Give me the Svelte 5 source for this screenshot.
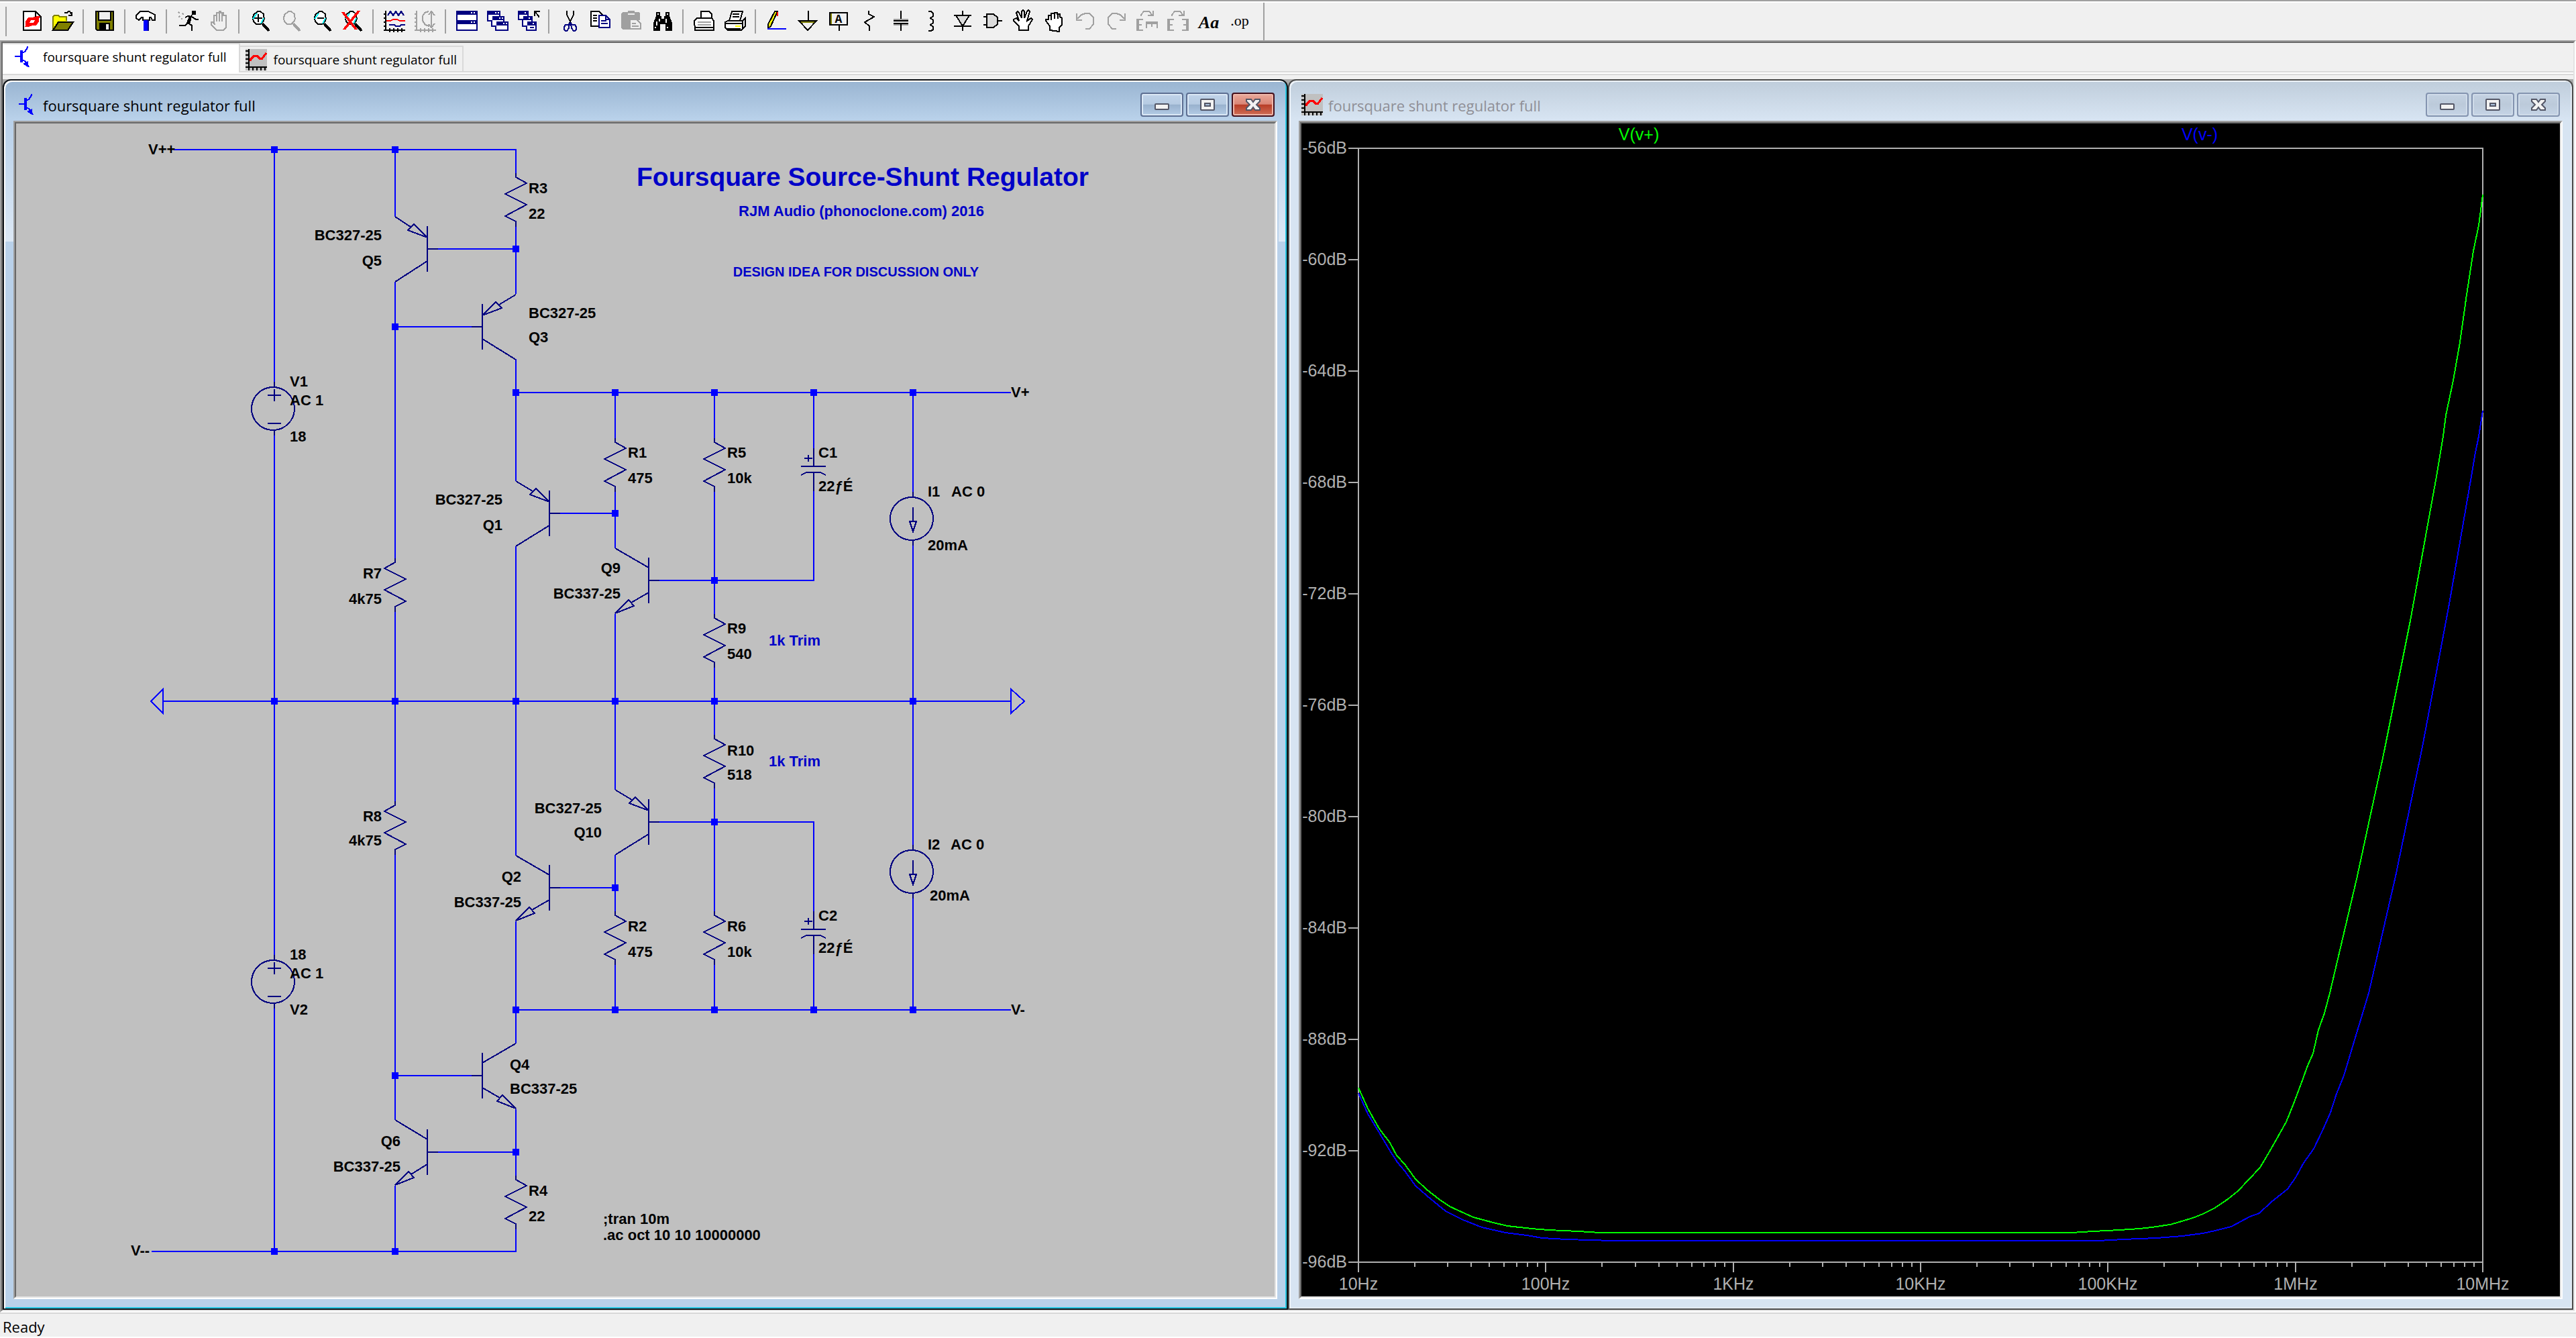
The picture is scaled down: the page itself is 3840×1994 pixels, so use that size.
<script lang="ts">
  type Shape = { d: string; fill?: string; stroke?: string; w?: number };
  type Glyph = { t: string; x: number; y: number; size: number; style?: string };
  type Tool = { name: string; shapes: Shape[]; glyphs?: Glyph[]; off?: boolean };

  const GREY = "#a0a0a0";
  const NAVY = "#000080";
  const LENS = "M6 .5h2l2.5 2v2l.5 1l-.5 2l-2.5 2.500h-3l-2-2l-.5-2.500l.5-2.500z";
  const HANDLE = "M9.500 9.500l5 5.500";
  const WAVE_AXES = "M1.500 0v15M0 14.500h16M0 2.500h1M0 5.500h1M0 8.500h1M0 11.500h1M4.500 13v3M7.500 13v3M10.500 13v3M13.500 13v3";
  const TURN_ARROW = "M3.500 4v-1l2-2.500h4l2.500 3M12.500 0v3.500h-4";

  // Toolbar groups; every icon lives on a 16 x 16 pixel grid.
  const groups: Tool[][] = [
    [
      {
        name: "New Schematic",
        shapes: [
          { d: "M1.500 .5h9l4 4v10h-13z", fill: "#fff", stroke: "#000" },
          { d: "M10.500 .5v4h4", stroke: "#000" },
          { d: "M3 11v-3l2-3h3l4-1h2l-1 2v2l-2 3h-3l-3 1h-3z", fill: "#f00" },
          { d: "M6 9l1-2h3l-1 2z", fill: "#fff" },
        ],
      },
      {
        name: "Open",
        shapes: [
          { d: "M1 14V4h4l1 1h5v3H5z", fill: "#ff0" },
          { d: "M.5 14.500V4.500l1-1h3l1 1h5v3", stroke: "#808000" },
          { d: "M.5 14.500l4-6h11l-4 6z", fill: "#808000", stroke: "#000" },
          { d: "M9 1.500h2l1-1h1l1.500 2.500M12 3.500h3M14.500 1v3", stroke: "#000" },
        ],
      },
    ],
    [
      {
        name: "Save",
        shapes: [
          { d: "M1.500 .5h13v14h-12l-1-1z", fill: "#808000", stroke: "#000" },
          { d: "M4 1h8v6H4z", fill: "#efefef" },
          { d: "M4 9h8v5H4z", fill: "#000" },
          { d: "M9 10h2v4H9z", fill: "#efefef" },
          { d: "M3.500 1v6h9V1", stroke: "#000" },
        ],
      },
    ],
    [
      {
        name: "Control Panel",
        shapes: [
          { d: "M.5 5.500v-2l3-3h6l2 1l3 1.500v4h-2l-1-2h-1v2h-5v-2h-1l-2 2z", fill: "#fff", stroke: "#000" },
          { d: "M6 7h4v8H6z", fill: "#00f" },
          { d: "M9.500 7v8", stroke: NAVY },
        ],
      },
    ],
    [
      {
        name: "Run",
        shapes: [
          { d: "M11 0h3v3h-3z", fill: "#000" },
          { d: "M11 3l-3 6l3 2v4M9 8l-3 3H1.500M6 5l2-1l3 .5l3 2h2", stroke: "#000" },
          { d: "M9 4l2 0l-1 5l-3 0z", fill: "#000" },
          { d: "M1 1l1 1M4 2l1 1M1 5l1-1M3 6l1 0", stroke: GREY },
        ],
      },
      {
        name: "Halt",
        off: true,
        shapes: [
          { d: "M4.500 9.500V3.500h2V1.500h2V.5h1v1h2v2h2v9l-2 2h-5l-4-4v-2h1l2 2", stroke: GREY },
          { d: "M6.500 3v5M8.500 2v6M10.500 2v6", stroke: GREY },
        ],
      },
    ],
    [
      {
        name: "Zoom in",
        shapes: [
          { d: LENS, fill: "#fff", stroke: "#000" },
          { d: "M2.500 6l3-4M8.500 9.500l2-4", stroke: "#0ff" },
          { d: "M6.500 2.500v6M3.500 5.500h6", stroke: "#000" },
          { d: HANDLE, stroke: "#000", w: 2 },
        ],
      },
      { name: "Pan", off: true, shapes: [{ d: LENS, stroke: GREY }, { d: HANDLE, stroke: GREY, w: 2 }] },
      {
        name: "Zoom back",
        shapes: [
          { d: LENS, fill: "#fff", stroke: "#000" },
          { d: "M2.500 6l3-4M8.500 9.500l2-4", stroke: "#0ff" },
          { d: "M4.500 5.500h5", stroke: "#000" },
          { d: HANDLE, stroke: "#000", w: 2 },
        ],
      },
      {
        name: "Zoom to fit",
        shapes: [
          { d: LENS, fill: "#fff", stroke: "#000" },
          { d: "M2.500 6l3-4M8.500 9.500l2-4", stroke: "#0ff" },
          { d: HANDLE, stroke: "#000", w: 2 },
          { d: "M0 1l10 13M12 0L1 14", stroke: "#f00", w: 1 },
          { d: "M1 1l10 13M13 0L2 14", stroke: "#f00", w: 1 },
        ],
      },
    ],
    [
      {
        name: "Autorange",
        shapes: [
          { d: WAVE_AXES, stroke: "#000" },
          { d: "M3 3.500l2-3l2 3l2-3l2 3l2-3l2 3", stroke: NAVY },
          { d: "M2 7.500h3l2-1h3l2 1h4", stroke: "#f00" },
          { d: "M4 10.500h4l1 1h3l1-1h3", stroke: NAVY },
        ],
      },
      {
        name: "Plot settings",
        off: true,
        shapes: [
          { d: WAVE_AXES, stroke: GREY },
          { d: "M10.500 .5l-3 1l-1.500 2.500v3.500l2 3l3 1M12.500 1v11M10.500 3l2-2.500l2.500 3M10.500 10l2 2.500l2.500-3", stroke: GREY },
        ],
      },
    ],
    [
      {
        name: "Tile windows",
        shapes: [
          { d: "M0 0h16v7H0zM0 7h16v8H0z", fill: NAVY },
          { d: "M1 3h14v4H1zM1 10h14v4H1zM11 1h1v1h-1zM13 1h1v1h-1zM11 8h1v1h-1zM13 8h1v1h-1z", fill: "#fff" },
        ],
      },
      {
        name: "Cascade windows",
        shapes: [
          { d: "M0 0h10v8H0zM3 4h10v8H3zM6 8h10v7H6z", fill: NAVY },
          { d: "M1 3h3v4H1zM4 3h5v1H4zM4 7h3v4H4zM7 7h5v1H7zM7 11h8v3H7zM6 1h1v1H6zM8 1h1v1H8zM9 5h1v1H9zM11 5h1v1h-1zM12 9h1v1h-1zM14 9h1v1h-1z", fill: "#fff" },
        ],
      },
      {
        name: "Close all windows",
        shapes: [
          { d: "M0 0h8v7H0zM3 4h8v8H3zM6 8h8v7H6z", fill: NAVY },
          { d: "M1 3h3v3H1zM4 3h3v1H4zM4 7h3v4H4zM7 7h3v1H7zM7 11h6v3H7zM5 1h1v1H5zM8 5h1v1H8zM11 9h1v1h-1z", fill: "#fff" },
          { d: "M9 12.500h3", stroke: NAVY },
          { d: "M15.500 5v-1l-3-3.500M12.500 4V.5h4", stroke: "#000" },
        ],
      },
    ],
    [
      {
        name: "Cut",
        shapes: [
          { d: "M5.500 0v3l3 6M10.500 0v3l-3 6", stroke: "#000" },
          { d: "M7.500 9.500l-1 1h-2l-1 1.500v2l1 1h1l1.500-2zM8.500 9.500l1 1h2l1 1.500v2l-1 1h-1l-1.500-2z", stroke: NAVY },
        ],
      },
      {
        name: "Copy",
        shapes: [
          { d: "M.5 .5h6l3 3v8h-9z", fill: "#fff", stroke: "#000" },
          { d: "M6.500 3.500h5l3 3v6h-8z", fill: "#fff", stroke: NAVY },
          { d: "M2 3.500h3M2 5.500h3M2 7.500h3", stroke: "#000" },
          { d: "M11.500 3.500v3h3M8 7.500h4M8 9.500h5", stroke: NAVY },
        ],
      },
      {
        name: "Paste",
        off: true,
        shapes: [
          { d: "M0 2l1-1h4V0h5v1h3l1 1v5h-2v7H1l-1-1z", fill: GREY },
          { d: "M5 2h5v1H5z", fill: "#efefef" },
          { d: "M6.500 6.500h5l3 3v4h-8z", fill: "#efefef", stroke: GREY },
          { d: "M8 9.500h3M8 11.500h5", stroke: GREY },
        ],
      },
      {
        name: "Find",
        shapes: [
          { d: "M3 1h3v3h1v2h2V4h1V1h3v3l2 5v6h-5v-5H6v5H1V9l2-5z", fill: "#000" },
          { d: "M4 2h1v1H4zM11 2h1v1h-1zM3 8h1v3H3zM10 6h1v3h-1zM2 12h1v1H2zM11 12h1v1h-1zM5 6h1v2H5z", fill: "#fff" },
        ],
      },
    ],
    [
      {
        name: "Print",
        shapes: [
          { d: "M5.500 5.500v-5h6l2 2v3z", fill: "#fff", stroke: "#000" },
          { d: "M.5 7.500l2-2h11l1.500 2v7h-14z", fill: "#fff", stroke: "#000" },
          { d: "M3 8.500h10M3 10.500h10", stroke: GREY },
          { d: "M1 12.500h14", stroke: "#000" },
        ],
      },
      {
        name: "Print preview",
        shapes: [
          { d: "M5.500 .5h8l-2 7h-8z", fill: "#fff", stroke: "#000" },
          { d: "M6 2.500h5M6 4.500h5", stroke: "#000" },
          { d: "M.5 8.500l2-1h11l2-2v6l-3 3h-10l-2-2z", fill: "#fff", stroke: "#000" },
          { d: "M1 9.500h12M2 13.500h10M13.500 8v5", stroke: "#000" },
          { d: "M8 11h4v1H8z", fill: "#ff0" },
        ],
      },
    ],
    [
      {
        name: "Wire",
        shapes: [
          { d: "M6.500 .5h2l-5 11l-2 1.500v-3z", fill: "#ff0", stroke: "#000" },
          { d: "M8.500 1v3", stroke: "#f00" },
          { d: "M1 13.500h14", stroke: "#00f" },
        ],
      },
      {
        name: "Ground",
        shapes: [
          { d: "M1.500 7.500h13l-6.500 7z", fill: "#efefef", stroke: "#000" },
          { d: "M3 8.500h10", stroke: "#808000" },
          { d: "M8.500 0v7", stroke: "#000" },
        ],
      },
      {
        name: "Label Net",
        shapes: [
          { d: "M2.500 1.500h12v9h-12z", stroke: "#808000" },
          { d: "M1.500 1.500h13v9h-13zM8.500 11v4", stroke: "#000" },
        ],
        glyphs: [{ t: "A", x: 8, y: 9, size: 9, style: "mono" }],
      },
      { name: "Resistor", shapes: [{ d: "M7.500 0v2.500l4 2l-7 4l3.500 3v3.500", stroke: "#000" }] },
      {
        name: "Capacitor",
        shapes: [
          { d: "M3 6h11v1H3zM3 10h11v1H3z", fill: GREY },
          { d: "M8.500 0v6M8.500 10v5M3 7.500h11M3 9.500h11", stroke: "#000" },
        ],
      },
      { name: "Inductor", shapes: [{ d: "M6 .5h2l1.500 1.500v2l-2 1.500l2 1.500v2l-2 1.500l2 1.500v2l-1.500 1h-2", stroke: "#000" }] },
      {
        name: "Diode",
        shapes: [
          { d: "M3.500 3.500h10l-5 8z", fill: "#dcdcdc", stroke: "#000" },
          { d: "M2 3.500h13M2 11.500h13M8.500 0v3M8.500 11v4", stroke: "#000" },
        ],
      },
      {
        name: "Component",
        shapes: [{ d: "M3.500 2.500h5l3 2.500v5l-3 2.500h-5zM1 4.500h2M1 10.500h2M12 7.500h3", fill: "#dcdcdc", stroke: "#000" }],
      },
      {
        name: "Move",
        shapes: [
          { d: "M4.500 14.500v-3l-4-4v-1l2-1l2 2l-2-6l1-1l1 1l2 4l0-5l1-1l1 1v5l2-5l1-1l1 1l-2 7l3-2l1 1l-3 5v3z", fill: "#fff", stroke: "#000" },
        ],
      },
      {
        name: "Drag",
        shapes: [
          { d: "M4.500 14.500v-3l-3-4v-1l2 0l0-3h2v-1.500h2.500v-.5h2v1h2v2l1.500 1v5l-2 2v3z", fill: "#fff", stroke: "#000" },
          { d: "M5.500 4v3M8 2v4M10.500 3v3", stroke: "#000" },
        ],
      },
      { name: "Undo", off: true, shapes: [{ d: "M1.500 2v5h4M2 6l3-3l3-1h3l3 3v5l-3 3.500h-3", stroke: GREY }] },
      { name: "Redo", off: true, shapes: [{ d: "M14.500 2v5h-4M14 6l-3-3l-3-1h-3l-3 3v5l3 3.500h3", stroke: GREY }] },
      {
        name: "Rotate",
        off: true,
        shapes: [
          { d: TURN_ARROW, stroke: GREY },
          { d: "M0 6h2v9H0zM2 6h3v1H2zM2 10h2v1H2zM2 14h3v1H2zM7 8h9v2H7zM7 10h1v3H7zM11 10h1v2h-1zM15 10h1v3h-1z", fill: GREY },
        ],
      },
      {
        name: "Mirror",
        off: true,
        shapes: [
          { d: TURN_ARROW, stroke: GREY },
          { d: "M0 6h2v9H0zM2 6h3v1H2zM2 10h2v1H2zM2 14h3v1H2zM14 6h2v9h-2zM11 6h3v1h-3zM12 10h2v1h-2zM11 14h3v1h-3z", fill: GREY },
        ],
      },
      { name: "Text", shapes: [], glyphs: [{ t: "Aa", x: 8, y: 13, size: 13, style: "italic" }] },
      { name: "SPICE Directive", shapes: [], glyphs: [{ t: ".op", x: 8, y: 11, size: 11, style: "serif" }] },
    ],
  ];

  const tabs = [
    { kind: "schematic", label: "foursquare shunt regulator full" },
    { kind: "plot", label: "foursquare shunt regulator full" },
  ];
  let activeTab = $state(0);

  // --- schematic ---
  const wires = [
    "M259 223H770", "M653 371H769", "M589 487H705", "M769 585H1507", "M834 765H917", "M983 865H1214",
    "M243 1045H1507", "M983 1225H1214", "M834 1323H917", "M769 1505H1507", "M589 1603H705", "M653 1717H769",
    "M226 1865H770",
    "M409 223V570M409 649V1424M409 1503V1865",
    "M589 223V323M589 420V832M589 911V1194M589 1273V1669M589 1767V1865",
    "M769 223V258M769 338V438M769 535V717M769 814V1275M769 1373V1555M769 1653V1752M769 1831V1865",
    "M917 585V653M917 732V817M917 915V1177M917 1274V1358M917 1437V1505",
    "M1065 585V653M1065 732V915M1065 994V1095M1065 1174V1358M1065 1437V1505",
    "M1213 585V668M1213 732V865M1213 1225V1358M1213 1422V1505",
    "M1361 585V733M1361 813V1259M1361 1339V1505",
    "M243 1027V1063L225 1045Z",
    "M1507 1027V1063L1527 1045Z",
  ];

  const nodes = [
    [409, 223], [589, 223], [769, 371], [589, 487],
    [769, 585], [917, 585], [1065, 585], [1213, 585], [1361, 585],
    [917, 765], [1065, 865],
    [409, 1045], [589, 1045], [769, 1045], [917, 1045], [1065, 1045], [1361, 1045],
    [1065, 1225], [917, 1323],
    [769, 1505], [917, 1505], [1065, 1505], [1213, 1505], [1361, 1505],
    [589, 1603], [769, 1717], [409, 1865], [589, 1865],
  ];

  // dir is the side of the first peak
  const resistors = [
    { x: 769, y: 258, dir: 1 }, { x: 589, y: 832, dir: -1 }, { x: 589, y: 1194, dir: -1 },
    { x: 917, y: 653, dir: 1 }, { x: 1065, y: 653, dir: 1 }, { x: 1065, y: 915, dir: 1 },
    { x: 1065, y: 1095, dir: 1 }, { x: 917, y: 1358, dir: 1 }, { x: 1065, y: 1358, dir: 1 },
    { x: 769, y: 1752, dir: 1 },
  ];

  // x is the wire column, bar the base plate, y the base level
  const transistors = [
    { x: 589, bar: 637, y: 371, pnp: true }, { x: 769, bar: 719, y: 487, pnp: true },
    { x: 769, bar: 819, y: 765, pnp: true }, { x: 917, bar: 967, y: 865, pnp: false },
    { x: 917, bar: 967, y: 1225, pnp: true }, { x: 769, bar: 819, y: 1323, pnp: false },
    { x: 769, bar: 719, y: 1603, pnp: false }, { x: 589, bar: 637, y: 1717, pnp: false },
  ];

  const voltageSources = [{ x: 409, y: 609 }, { x: 409, y: 1463 }];
  const currentSources = [{ x: 1361, y: 773 }, { x: 1361, y: 1299 }];
  const capacitors = [{ x: 1213, y: 695 }, { x: 1213, y: 1385 }];

  const labels: { t: string; x: number; y: number; end?: boolean }[] = [
    { t: "V++", x: 221, y: 230 },
    { t: "R3", x: 788, y: 288 }, { t: "22", x: 788, y: 326 },
    { t: "BC327-25", x: 569, y: 358, end: true }, { t: "Q5", x: 569, y: 396, end: true },
    { t: "BC327-25", x: 788, y: 474 }, { t: "Q3", x: 788, y: 510 },
    { t: "V1", x: 432, y: 576 }, { t: "AC 1", x: 432, y: 604 }, { t: "18", x: 432, y: 658 },
    { t: "R7", x: 569, y: 862, end: true }, { t: "4k75", x: 569, y: 900, end: true },
    { t: "R8", x: 569, y: 1224, end: true }, { t: "4k75", x: 569, y: 1260, end: true },
    { t: "BC327-25", x: 749, y: 752, end: true }, { t: "Q1", x: 749, y: 790, end: true },
    { t: "Q9", x: 925, y: 854, end: true }, { t: "BC337-25", x: 925, y: 892, end: true },
    { t: "BC327-25", x: 897, y: 1212, end: true }, { t: "Q10", x: 897, y: 1248, end: true },
    { t: "Q2", x: 777, y: 1314, end: true }, { t: "BC337-25", x: 777, y: 1352, end: true },
    { t: "18", x: 432, y: 1430 }, { t: "AC 1", x: 432, y: 1458 }, { t: "V2", x: 432, y: 1512 },
    { t: "Q4", x: 760, y: 1594 }, { t: "BC337-25", x: 760, y: 1630 },
    { t: "Q6", x: 597, y: 1708, end: true }, { t: "BC337-25", x: 597, y: 1746, end: true },
    { t: "R4", x: 788, y: 1782 }, { t: "22", x: 788, y: 1820 },
    { t: "V--", x: 195, y: 1871 },
    { t: ";tran 10m", x: 899, y: 1824 }, { t: ".ac oct 10 10 10000000", x: 899, y: 1848 },
    { t: "R1", x: 936, y: 682 }, { t: "475", x: 936, y: 720 },
    { t: "R5", x: 1084, y: 682 }, { t: "10k", x: 1084, y: 720 },
    { t: "C1", x: 1220, y: 682 }, { t: "22ƒÉ", x: 1220, y: 732 },
    { t: "I1", x: 1383, y: 740 }, { t: "AC 0", x: 1418, y: 740 }, { t: "20mA", x: 1383, y: 820 },
    { t: "R9", x: 1084, y: 944 }, { t: "540", x: 1084, y: 982 },
    { t: "R10", x: 1084, y: 1126 }, { t: "518", x: 1084, y: 1162 },
    { t: "I2", x: 1383, y: 1266 }, { t: "AC 0", x: 1417, y: 1266 }, { t: "20mA", x: 1386, y: 1342 },
    { t: "R2", x: 936, y: 1388 }, { t: "475", x: 936, y: 1426 },
    { t: "R6", x: 1084, y: 1388 }, { t: "10k", x: 1084, y: 1426 },
    { t: "C2", x: 1220, y: 1372 }, { t: "22ƒÉ", x: 1220, y: 1420 },
    { t: "V+", x: 1507, y: 592 }, { t: "V-", x: 1507, y: 1512 },
  ];

  function zigzag(r: { x: number; y: number; dir: number }): string {
    const right = r.x + 16 * r.dir;
    const left = r.x - 16 * r.dir;
    return `M${r.x} ${r.y}v6L${right} ${r.y + 15}L${left} ${r.y + 31}L${right} ${r.y + 47}L${left} ${r.y + 64}L${r.x} ${r.y + 72}v8`;
  }

  function bjt(q: { x: number; bar: number; y: number; pnp: boolean }): string {
    const s = q.bar > q.x ? -1 : 1;
    const body = `M${q.bar} ${q.y - 34}V${q.y + 34}M${q.bar} ${q.y}h${-s * 16}`;
    if (q.pnp) {
      return `${body}M${q.x} ${q.y - 48}L${q.bar + s * 25} ${q.y - 33}`
        + `M${q.bar} ${q.y - 17}l${s * 20} -20l${s * 9} 9z`
        + `M${q.bar} ${q.y + 18}L${q.x} ${q.y + 49}`;
    }
    return `${body}M${q.x} ${q.y - 48}L${q.bar} ${q.y - 19}`
      + `M${q.bar} ${q.y + 18}L${q.x - s * 24} ${q.y + 33}`
      + `M${q.x} ${q.y + 49}l${-s * 20} -20l${-s * 8} 9z`;
  }

  // --- waveform plot ---
  const LEFT = 2025;
  const RIGHT = 3701;
  const TOP = 221;
  const BOTTOM = 1881;
  const DECADES = 6;
  const dbLabels = Array.from({ length: 11 }, (_, i) => -56 - i * 4);
  const freqLabels = ["10Hz", "100Hz", "1KHz", "10KHz", "100KHz", "1MHz", "10MHz"];
  const minorTicks = Array.from({ length: DECADES }, (_, d) =>
    [2, 3, 4, 5, 6, 7, 8, 9].map((m) => freqX(d + Math.log10(m))),
  ).flat();

  const traces = [
    {
      name: "V(v+)",
      color: "#00ff00",
      at: 2443,
      points: "2025,1621 2039,1652 2056,1682 2072,1703 2082,1722 2094,1735 2110,1757 2127,1773 2145,1787 2161,1798 2196,1814 2226,1822 2247,1827 2283,1831 2308,1833 2353,1835 2385,1837 3088,1837 3120,1835 3160,1833 3189,1831 3208,1829 3221,1827 3235,1825 3249,1821 3269,1815 3284,1809 3302,1800 3321,1787 3336,1775 3353,1757 3369,1740 3382,1718 3394,1697 3408,1672 3419,1645 3431,1613 3440,1588 3448,1570 3456,1535 3465,1510 3473,1480 3513,1310 3553,1125 3593,925 3632,710 3642,650 3646,619 3657,567 3667,510 3677,439 3687,374 3695,336 3701,290",
    },
    {
      name: "V(v-)",
      color: "#0000ff",
      at: 3279,
      points: "2025,1629 2039,1660 2056,1688 2072,1715 2083,1732 2094,1745 2110,1767 2127,1782 2155,1805 2181,1818 2209,1829 2244,1837 2276,1841 2299,1845 2335,1847 2404,1849 3128,1849 3165,1847 3215,1845 3253,1842 3284,1838 3302,1834 3326,1828 3354,1813 3368,1808 3385,1792 3410,1772 3422,1755 3434,1733 3449,1712 3462,1685 3474,1658 3483,1630 3494,1603 3503,1573 3515,1533 3531,1480 3571,1306 3611,1113 3651,900 3684,710 3689,680 3695,650 3701,612",
    },
  ];

  function freqX(decade: number): number {
    return Math.round(LEFT + (decade / DECADES) * (RIGHT - LEFT));
  }
  function dbY(db: number): number {
    return TOP + ((-56 - db) / 40) * (BOTTOM - TOP);
  }
</script>

{#snippet docIcon(kind: string)}
  <svg class="doc-icon" viewBox="0 0 16 16" aria-hidden="true">
    {#if kind === "schematic"}
      <path d="M2 7.500h4M11.500 0v1l-2 3l-2 1M7.500 10l2 1l3 4.500" stroke="#00f" fill="none" />
      <path d="M6 3h2v9H6z" fill="#00f" />
      <path d="M8 13l4-2v4h-1z" fill="#00f" />
    {:else}
      <path d="M0 0h16v16H0z" fill="#c0c0c0" />
      <path d="M2 0h1v16H2zM0 13h16v1H0zM0 1h2v1H0zM0 4h2v1H0zM0 7h2v1H0zM0 10h2v1H0zM5 14h1v2H5zM8 14h1v2H8zM11 14h1v2h-1zM14 14h1v2h-1z" fill="#000" />
      <path d="M3.500 9V8l3-3h2l2 2h2l3-4" stroke="#f00" stroke-width="1.500" fill="none" />
    {/if}
  </svg>
{/snippet}

{#snippet titleBar(kind: string, title: string)}
  <header class="title-bar">
    {@render docIcon(kind)}
    <h2>{title}</h2>
    <div class="caption">
      <button type="button" aria-label="Minimize">
        <svg viewBox="0 0 24 20"><rect class="knob" x="2" y="9" width="20" height="8" rx="1" /></svg>
      </button>
      <button type="button" aria-label="Maximize">
        <svg viewBox="0 0 24 20"><rect class="knob" x="2" y="2" width="20" height="16" rx="1" /><rect class="hole" x="8" y="8" width="8" height="4" /></svg>
      </button>
      <button type="button" class="close" aria-label="Close">
        <svg viewBox="0 0 24 20"><path class="knob" d="M2 2h7l3 4l3-4h7v3l-5 5l5 5v3h-7l-3-4l-3 4h-7v-3l5-5l-5-5z" /></svg>
      </button>
    </div>
  </header>
{/snippet}

<div class="app">
  <div class="toolbar" role="toolbar" aria-label="Main">
    {#each groups as group}
      <div class="group">
        {#each group as tool}
          <button type="button" class="tool" aria-label={tool.name} disabled={tool.off}>
            <svg viewBox="0 0 16 16" aria-hidden="true">
              {#each tool.shapes as s}
                <path d={s.d} fill={s.fill ?? "none"} stroke={s.stroke ?? "none"} stroke-width={s.w ?? 1} />
              {/each}
              {#each tool.glyphs ?? [] as g}
                <text class={g.style} x={g.x} y={g.y} font-size={g.size}>{g.t}</text>
              {/each}
            </svg>
          </button>
        {/each}
      </div>
    {/each}
  </div>

  <main class="workspace">
    <div class="workspace-inner">
      <div class="tabs" role="tablist">
        {#each tabs as tab, i}
          <button type="button" role="tab" class="tab" class:active={i === activeTab} aria-selected={i === activeTab} onclick={() => (activeTab = i)}>
            {@render docIcon(tab.kind)}
            <span>{tab.label}</span>
          </button>
        {/each}
      </div>

      <div class="desktop">
        <section class="window active">
          {@render titleBar("schematic", "foursquare shunt regulator full")}
          <div class="client">
            <svg class="schematic" viewBox="24 184 1876 1748" preserveAspectRatio="xMinYMin meet" role="img" aria-label="Schematic">
              <g class="wire">
                {#each wires as d}
                  <path {d} />
                {/each}
              </g>
              <g class="node">
                {#each nodes as [x, y]}
                  <rect x={x - 5} y={y - 5} width="10" height="10" />
                {/each}
              </g>
              <g class="part">
                {#each resistors as r}
                  <path d={zigzag(r)} />
                {/each}
                {#each transistors as q}
                  <path d={bjt(q)} />
                {/each}
                {#each voltageSources as v}
                  <circle cx={v.x - 2} cy={v.y} r="32" />
                  <path d="M{v.x} {v.y - 40}v8M{v.x} {v.y + 32}v8M{v.x} {v.y - 29}v18M{v.x - 10} {v.y - 20}h20M{v.x - 10} {v.y + 22}h20" />
                {/each}
                {#each currentSources as c}
                  <circle cx={c.x - 2} cy={c.y} r="32" />
                  <path d="M{c.x} {c.y - 40}v8M{c.x} {c.y + 32}v8M{c.x} {c.y - 17}v21M{c.x - 5} {c.y + 4}h10l-5 15z" />
                {/each}
                {#each capacitors as c}
                  <path d="M{c.x} {c.y - 27}v27M{c.x - 19} {c.y}h37M{c.x - 19} {c.y + 13}l8 -4h21l8 4M{c.x} {c.y + 9}v28M{c.x - 14} {c.y - 12}h12M{c.x - 8} {c.y - 17}v10" />
                {/each}
              </g>
              {#each labels as l}
                <text class="label" class:end={l.end} x={l.x} y={l.y}>{l.t}</text>
              {/each}
              <text class="heading" x="1286" y="277">Foursquare Source-Shunt Regulator</text>
              <text class="comment mid" x="1284" y="322">RJM Audio (phonoclone.com) 2016</text>
              <text class="notice" x="1276" y="412">DESIGN IDEA FOR DISCUSSION ONLY</text>
              <text class="comment" x="1146" y="962">1k Trim</text>
              <text class="comment" x="1146" y="1142">1k Trim</text>
            </svg>
          </div>
        </section>

        <section class="window">
          {@render titleBar("plot", "foursquare shunt regulator full")}
          <div class="client dark">
            <svg class="plot" viewBox="1940 184 1876 1748" preserveAspectRatio="xMinYMin meet" role="img" aria-label="Frequency response of V(v+) and V(v-)">
              <g class="axis">
                <rect x={LEFT} y={TOP} width={RIGHT - LEFT} height={BOTTOM - TOP} />
                {#each dbLabels as db}
                  <line x1={LEFT - 15} x2={LEFT} y1={dbY(db)} y2={dbY(db)} />
                {/each}
                {#each freqLabels as _, i}
                  <line x1={freqX(i)} x2={freqX(i)} y1={BOTTOM} y2={BOTTOM + 15} />
                {/each}
                {#each minorTicks as x}
                  <line x1={x} x2={x} y1={BOTTOM} y2={BOTTOM + 7} />
                {/each}
              </g>
              {#each dbLabels as db}
                <text class="tick end" x={LEFT - 17} y={dbY(db) + 8}>{db}dB</text>
              {/each}
              {#each freqLabels as f, i}
                <text class="tick" x={freqX(i)} y={BOTTOM + 41}>{f}</text>
              {/each}
              {#each [...traces].reverse() as trace}
                <polyline points={trace.points} stroke={trace.color} />
              {/each}
              {#each traces as trace}
                <text class="trace-name" x={trace.at} y={TOP - 12} fill={trace.color}>{trace.name}</text>
              {/each}
            </svg>
          </div>
        </section>
      </div>
    </div>
  </main>

  <footer class="status">Ready</footer>
</div>

<style>
  :global(body) {
    margin: 0;
    background: #f0f0f0;
  }

  .app {
    display: flex;
    flex-direction: column;
    height: 100vh;
    background: #f0f0f0;
    color: #000;
    font-family: "Open Sans", "Noto Sans", sans-serif;
  }

  .app::before {
    flex: none;
    height: 2px;
    border-top: 2px solid #a0a0a0;
    background: #fff;
    content: "";
  }

  button {
    margin: 0;
    padding: 0;
    border: 0;
    background: none;
    color: inherit;
    font: inherit;
  }

  .toolbar {
    display: flex;
    align-items: stretch;
    align-self: flex-start;
    height: 56px;
    padding: 0 4px 0 17px;
    border-right: 2px solid #a0a0a0;
    background: linear-gradient(#a0a0a0, #a0a0a0) left 8px top 6px / 2px 44px no-repeat;
  }

  .group {
    display: flex;
    align-items: center;
    padding: 0 8px;
    background: linear-gradient(#a0a0a0, #a0a0a0) right 0 top 10px / 2px 36px no-repeat;
  }

  .group:last-child {
    background: none;
  }

  .tool {
    display: grid;
    width: 46px;
    height: 46px;
    place-items: center;
  }

  .tool svg,
  .doc-icon {
    display: block;
    flex: none;
    width: 32px;
    height: 32px;
    overflow: visible;
    shape-rendering: crispEdges;
  }

  .tool text {
    font-weight: 700;
    text-anchor: middle;
  }

  .tool .italic {
    font-family: "Liberation Serif", serif;
    font-style: italic;
  }

  .tool .serif {
    font-family: "Liberation Serif", serif;
    font-weight: 400;
  }

  .tool .mono {
    font-family: "Liberation Mono", monospace;
  }

  .workspace {
    display: flex;
    flex: 1;
    min-height: 0;
    border: 2px solid;
    border-color: #a0a0a0 #fff #fff #a0a0a0;
  }

  .workspace-inner {
    display: flex;
    flex: 1;
    flex-direction: column;
    min-width: 0;
    border: 2px solid;
    border-color: #696969 #e3e3e3 #e3e3e3 #696969;
  }

  .tabs {
    display: flex;
    flex: none;
    align-items: flex-start;
    height: 48px;
    margin-bottom: 6px;
    box-shadow: inset 0 -2px #d9d9d9, inset 0 -4px #fff, inset 0 -6px #d9d9d9;
  }

  .tab {
    display: flex;
    gap: 10px;
    align-items: center;
    height: 40px;
    margin-top: 4px;
    padding: 2px 8px 0;
    border: 2px solid #d9d9d9;
    border-left: 0;
    box-sizing: border-box;
    font-size: 19px;
  }

  .tab.active {
    height: 44px;
    margin-top: 0;
    padding: 0 18px 4px 14px;
    gap: 14px;
    border-bottom: 0;
    background: #fff;
  }

  .desktop {
    display: flex;
    flex: 1;
    min-height: 0;
    background: #ababab;
  }

  .window {
    display: flex;
    flex: 1;
    flex-direction: column;
    min-width: 0;
    padding: 2px 14px 14px;
    border: 2px solid #4b4b4b;
    border-radius: 12px 12px 0 0;
    background: linear-gradient(#bfcddb, #d7e4f2 58px);
    box-shadow: inset 2px 2px #eef3f8, inset -2px -2px #e3ebf3;
  }

  .window.active {
    border-color: #101418;
    background:
      linear-gradient(#b9d1ea, #dce8f5) left 0 top 62px / 14px 178px no-repeat,
      linear-gradient(#b9d1ea, #dce8f5) right 0 top 62px / 12px 178px no-repeat,
      linear-gradient(#99b4d1, #b9d1ea 58px);
    box-shadow: inset 2px 2px #fff, inset -2px -2px #28c8e4;
  }

  .title-bar {
    display: flex;
    flex: none;
    gap: 8px;
    align-items: center;
    height: 58px;
    padding: 0 4px;
    color: #8f8f96;
  }

  .active .title-bar {
    color: #000;
  }

  .title-bar .doc-icon {
    margin-top: 10px;
  }

  h2 {
    flex: 1;
    margin: 12px 0 0;
    font-size: 22px;
    font-weight: 400;
    line-height: 32px;
  }

  .caption {
    display: flex;
    gap: 4px;
    padding-top: 10px;
  }

  .caption button {
    display: grid;
    width: 64px;
    height: 36px;
    border: 2px solid #8494b0;
    border-radius: 4px;
    background: linear-gradient(#c3d1e1, #bccada 50%, #c5d4e6);
    box-shadow: inset 0 0 0 2px #cfdbe9;
    place-items: center;
  }

  .active .caption button {
    border-color: #5d6f92;
    background: linear-gradient(#c0d3e9, #b6cbe2 48%, #98b1cd 50%, #b4cce6);
    box-shadow: inset 0 0 0 2px #dbe8f5;
  }

  .active .caption .close {
    border-color: #43101c;
    background: linear-gradient(#e9a99b, #da8575 48%, #b83c25 50%, #cf6f58);
    box-shadow: inset 0 0 0 2px #eeb5a8;
  }

  .caption svg {
    width: 24px;
    height: 20px;
  }

  .knob {
    fill: #f2f2f2;
    stroke: #535666;
    stroke-width: 2px;
  }

  .hole {
    fill: #a9bfda;
    stroke: #535666;
    stroke-width: 2px;
  }

  .client {
    flex: 1;
    min-height: 0;
    border: 2px solid;
    border-color: #a0a0a0 #fff #fff #a0a0a0;
    background: #c0c0c0;
  }

  .client.dark {
    background: #000;
  }

  .client svg {
    display: block;
    box-sizing: border-box;
    width: 100%;
    height: 100%;
    border: 2px solid;
    border-color: #696969 #e3e3e3 #e3e3e3 #696969;
  }

  .wire,
  .part {
    fill: none;
    stroke: #00f;
    stroke-width: 2px;
    shape-rendering: crispEdges;
  }

  .part {
    stroke: #000080;
  }

  .node {
    fill: #00f;
  }

  .label,
  .comment,
  .notice,
  .heading {
    font-family: "Liberation Sans", Arial, sans-serif;
    font-size: 22px;
    font-weight: 700;
  }

  .end {
    text-anchor: end;
  }

  .comment,
  .notice,
  .heading {
    fill: #0000c8;
  }

  .mid,
  .notice,
  .heading {
    text-anchor: middle;
  }

  .notice {
    font-size: 20px;
  }

  .heading {
    font-size: 39px;
  }

  .axis {
    fill: none;
    stroke: #b0b0b0;
    stroke-width: 2px;
    shape-rendering: crispEdges;
  }

  polyline {
    fill: none;
    stroke-width: 2px;
    shape-rendering: crispEdges;
  }

  .tick,
  .trace-name {
    font-family: "Liberation Sans", Arial, sans-serif;
    font-size: 25px;
    text-anchor: middle;
  }

  .tick {
    fill: #b0b0b0;
  }

  .tick.end {
    text-anchor: end;
  }

  .status {
    flex: none;
    height: 34px;
    padding-left: 4px;
    border-top: 2px solid #d7d7d7;
    border-bottom: 2px solid #fff;
    font-size: 22px;
    line-height: 38px;
  }
</style>
